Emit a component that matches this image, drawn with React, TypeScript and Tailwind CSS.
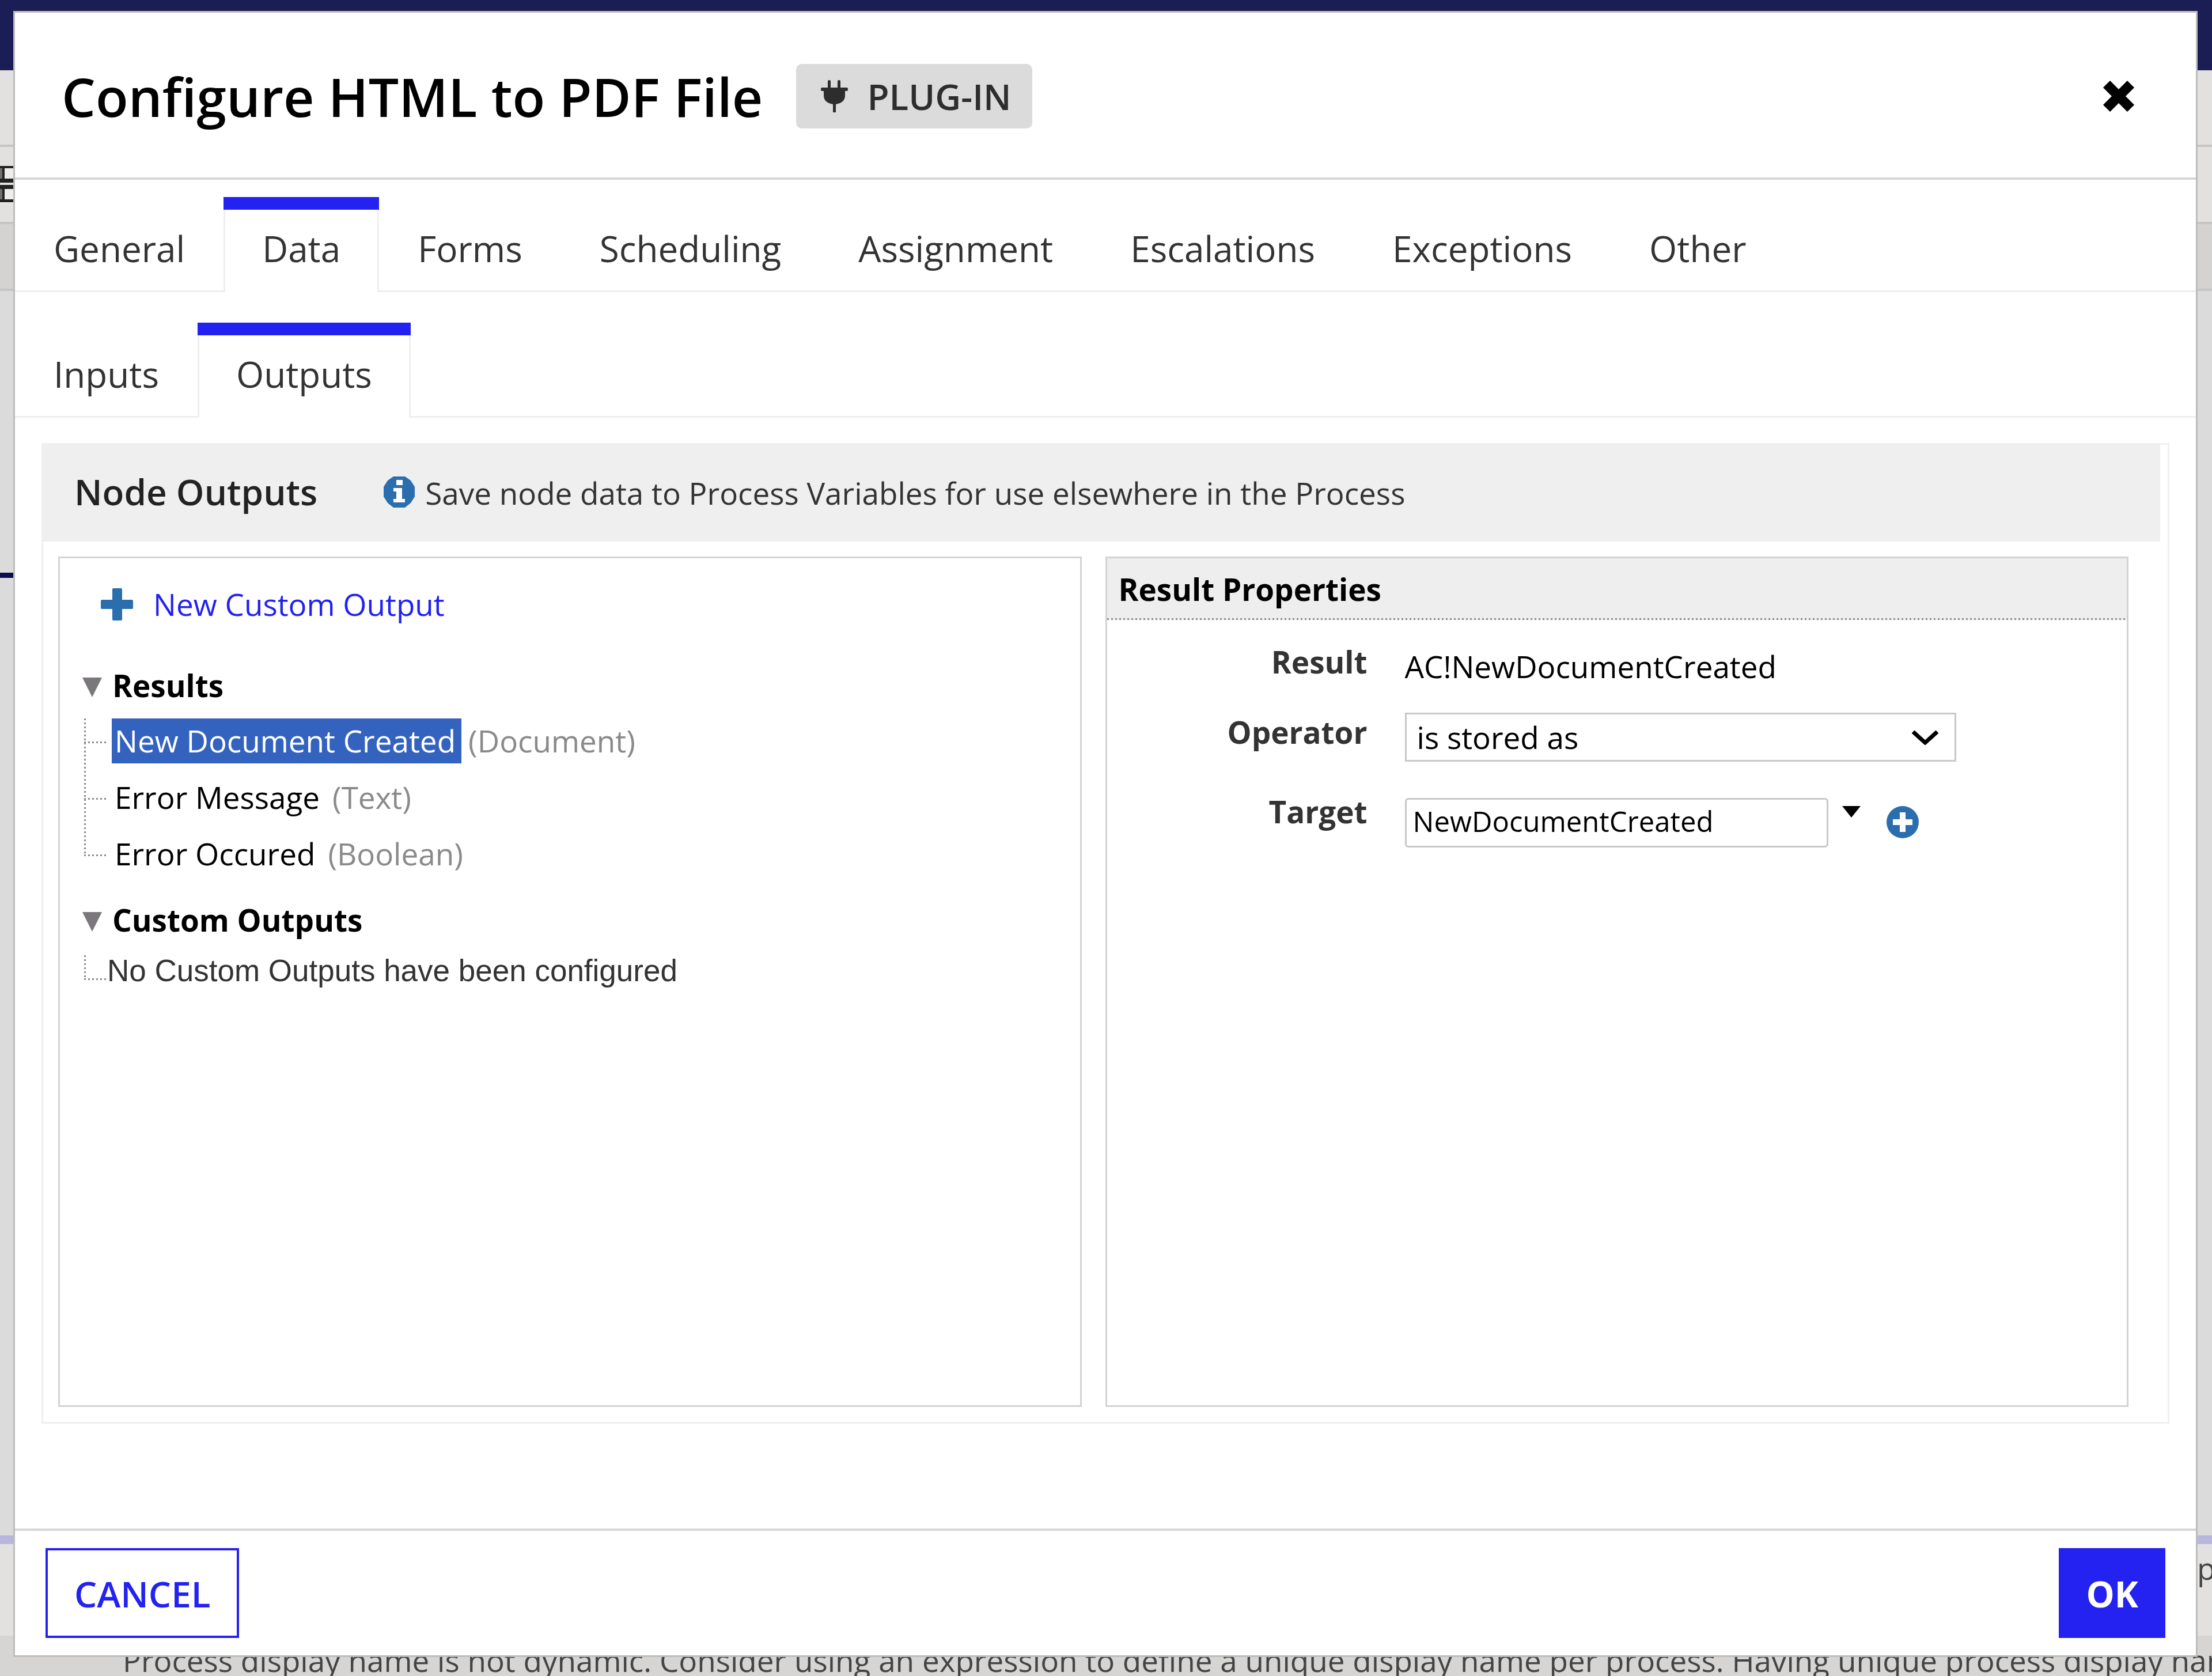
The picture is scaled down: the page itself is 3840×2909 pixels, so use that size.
import { useState } from "react";

function Dots({ vertical = false, className }: { vertical?: boolean; className: string }) {
  return (
    <span
      aria-hidden="true"
      className={
        (vertical
          ? "bg-[repeating-linear-gradient(to_bottom,#8a8a8a_0px,#8a8a8a_3px,transparent_3px,transparent_7px)] w-[3px] "
          : "bg-[repeating-linear-gradient(to_right,#8a8a8a_0px,#8a8a8a_3px,transparent_3px,transparent_7px)] h-[3px] ") + className
      }
    />
  );
}

function PlugIcon() {
  return (
    <svg viewBox="0 0 47 56" className="h-[56px] w-[47px]" aria-hidden="true">
      <path
        d="M12 2Q12 0 14.500 0T17 2V13H29V2Q29 0 31.500 0T34 2V13H45Q47 13 47 16T45 19H42V27Q42 39 26 42V56H21V42Q5 39 5 27V19H2Q0 19 0 16T2 13H12Z"
        fill="#2d2d2d"
      />
    </svg>
  );
}

function CloseIcon() {
  return (
    <svg viewBox="0 0 58 56" className="h-[56px] w-[58px]" aria-hidden="true">
      <path d="M8 7 L50 49 M50 7 L8 49" stroke="#000" strokeWidth="17" fill="none" />
    </svg>
  );
}

function InfoIcon() {
  return (
    <svg viewBox="0 0 54 54" className="mb-[5px] h-[54px] w-[54px]" aria-hidden="true">
      <path d="M17 0H37L47 7L54 18V35L47 46L37 54H17L7 46L0 35V18L7 7Z" fill="#2a6eae" />
      <path d="M22 6h11v9H22zM17 20h15v19h5v6H17v-6h5V26h-5z" fill="#fff" />
    </svg>
  );
}

function PlusIcon() {
  return (
    <svg viewBox="0 0 56 56" className="h-[56px] w-[56px]" aria-hidden="true">
      <path
        d="M21 0h14q2 0 2 2v18h17q2 0 2 2v12q0 2-2 2H37v18q0 2-2 2H22q-2 0-2-2V36H2q-2 0-2-2V22q0-2 2-2h18V2q0-2 2-2z"
        fill="#2a6eae"
      />
    </svg>
  );
}

function PlusCircleIcon() {
  return (
    <svg viewBox="0 0 56 56" className="h-[56px] w-[56px]" aria-hidden="true">
      <circle cx="28" cy="28" r="28" fill="#2a6eae" />
      <path d="M23 11h10v12h12v10H33v12H23V33H11V23h12z" fill="#fff" />
    </svg>
  );
}

function Triangle({ className }: { className: string }) {
  return (
    <svg viewBox="0 0 34 34" preserveAspectRatio="none" className={className} aria-hidden="true">
      <path d="M0 0H34L17 34Z" fill="currentColor" />
    </svg>
  );
}

function Tabs({ items, active, onSelect, label }: { items: string[]; active: string; onSelect: (s: string) => void; label: string }) {
  return (
    <div role="tablist" aria-label={label} className="flex h-[165px] text-[62px] leading-[80px] text-[#333]">
      {items.map((t) => (
        <button
          key={t}
          role="tab"
          aria-selected={t === active}
          onClick={() => onSelect(t)}
          className={t === active ? "flex border-t-[22px] border-[#2322f0]" : "flex border-b-[3px] border-[#eee] px-[67px] pt-[49px]"}
        >
          {t === active ? <span className="h-full border-x-[3px] border-[#eee] px-[64px] pt-[27px]">{t}</span> : t}
        </button>
      ))}
      <span className="flex-1 border-b-[3px] border-[#eee]" />
    </div>
  );
}

const results = [
  { name: "New Document Created", type: "(Document)" },
  { name: "Error Message", type: "(Text)" },
  { name: "Error Occured", type: "(Boolean)" },
];

function OutputTree() {
  const [selected, setSelected] = useState("New Document Created");
  return (
    <section className="border-[3px] border-[#d3d3d3] pt-[45px] pl-[39px] text-[53px] leading-[70px] text-black">
      <button className="flex items-center gap-[35px] pl-[32px] text-[#2322f0]">
        <PlusIcon />
        New Custom Output
      </button>
      <h3 className="mt-[71px] flex items-center gap-[18px] font-bold">
        <Triangle className="mt-[6px] h-[34px] w-[34px] text-[#7b787b]" />
        Results
      </h3>
      <ul className="mt-[22px]">
        {results.map((r, i) => (
          <li key={r.name} className="flex h-[98px]">
            <span className="relative w-[51px]">
              <Dots vertical className={i === results.length - 1 ? "absolute left-[3px] top-0 h-[42px]" : "absolute left-[3px] top-0 h-[98px]"} />
              <Dots className="absolute left-[3px] top-[40px] w-[40px]" />
            </span>
            <button
              onClick={() => setSelected(r.name)}
              className={r.name === selected ? "h-[78px] bg-[#3462bf] pr-[10px] pl-[5px] text-white" : "h-[78px] pr-[10px] pl-[5px]"}
            >
              {r.name}
            </button>
            <span className="ml-[12px] h-[78px] leading-[78px] text-[#8a8a8a]">{r.type}</span>
          </li>
        ))}
      </ul>
      <h3 className="mt-[21px] flex items-center gap-[18px] font-bold">
        <Triangle className="mt-[6px] h-[34px] w-[34px] text-[#7b787b]" />
        Custom Outputs
      </h3>
      <div className="mt-[18px] flex h-[70px] font-['Liberation_Sans',sans-serif] text-[#333]">
        <span className="relative w-[43px]">
          <Dots vertical className="absolute left-[3px] top-[8px] h-[42px]" />
          <Dots className="absolute left-[3px] top-[48px] w-[40px]" />
        </span>
        No Custom Outputs have been configured
      </div>
    </section>
  );
}

function ResultProperties() {
  return (
    <section className="border-[3px] border-[#d3d3d3] text-[53px] leading-[70px] text-black">
      <div className="flex h-[107px] flex-col justify-between bg-[#eee]">
        <h3 className="pt-[19px] pl-[20px] font-bold">Result Properties</h3>
        <Dots className="w-full" />
      </div>
      <div className="grid grid-cols-[452px_1fr] gap-x-[65px]">
        <span className="pt-[38px] text-right font-bold text-[#333]">Result</span>
        <span className="pt-[46px]">AC!NewDocumentCreated</span>
        <label htmlFor="operator" className="pt-[44px] text-right font-bold text-[#333]">
          Operator
        </label>
        <span className="relative mt-[45px] w-[957px]">
          <select id="operator" className="block h-[85px] w-full appearance-none border-[3px] border-[#c8c8c8] bg-white pl-[18px] leading-[70px]">
            <option>is stored as</option>
          </select>
          <svg viewBox="0 0 46 26" className="pointer-events-none absolute top-[30px] right-[31px] h-[26px] w-[46px]" aria-hidden="true">
            <path d="M2 3L23 22L44 3" stroke="#000" strokeWidth="7" fill="none" />
          </svg>
        </span>
        <label htmlFor="target" className="pt-[52px] text-right font-bold text-[#333]">
          Target
        </label>
        <span className="mt-[63px] flex">
          <input
            id="target"
            defaultValue="NewDocumentCreated"
            className="h-[86px] w-[735px] rounded-[6px] border-[3px] border-[#c8c8c8] pb-[6px] pl-[11px] text-[49px]"
          />
          <button aria-label="Choose target" className="ml-[24px] self-start pt-[14px]">
            <Triangle className="h-[20px] w-[32px] text-black" />
          </button>
          <button aria-label="New variable" className="ml-[45px] self-start pt-[14px]">
            <PlusCircleIcon />
          </button>
        </span>
      </div>
    </section>
  );
}

function Backdrop() {
  return (
    <div className="flex min-h-screen flex-col overflow-hidden bg-[#dbdbdb] text-[53px] leading-[70px] text-[#444]" aria-hidden="true">
      <div className="h-[122px] bg-[#1a1e54]" />
      <div className="h-[133px] border-b-[4px] border-[#c6c5c3] bg-[#e2e1df]" />
      <div className="flex h-[134px] items-center border-b-[4px] border-[#c6c5c3] bg-[#e2e1df]">
        <svg viewBox="0 0 24 66" className="h-[66px] w-[24px]">
          <path d="M0 0H24V30H0zM0 34H24V66H0z" fill="#eeedeb" />
          <path d="M0 3H4V28H0zM0 37H4V62H0z" fill="#707070" />
          <path d="M0 1H24V5H8V23H24V30H0V23H4V5H0zM0 34H24V41H8V59H24V64H0V59H4V41H0z" fill="#222" />
        </svg>
      </div>
      <div className="h-[116px] border-b-[4px] border-[#c6c5c3] bg-[#d4d3d1]" />
      <div className="flex-1 pt-[489px]">
        <div className="h-[9px] w-[24px] bg-[#0c0c50]" />
      </div>
      <div className="flex h-[174px] justify-end border-t-[15px] border-[#b9b6dd] bg-[#e2e1df] pt-[7px]">
        <span className="w-[26px]">p</span>
      </div>
      <div className="h-[70px] bg-[#d6d5d3] pt-[8px] pl-[213px] whitespace-nowrap">
        Process display name is not dynamic. Consider using an expression to define a unique display name per process. Having unique process display names
      </div>
    </div>
  );
}

export default function App() {
  const [tab, setTab] = useState("Data");
  const [sub, setSub] = useState("Outputs");
  return (
    <div className="relative h-screen overflow-hidden font-['Open_Sans',sans-serif]">
      <Backdrop />
      <div
        role="dialog"
        aria-labelledby="title"
        className="absolute inset-x-0 top-[19px] bottom-[33px] mr-[25px] ml-[23px] flex flex-col border-[3px] border-[#bdbdbd] bg-white"
      >
        <header className="flex h-[290px] items-center border-b-[4px] border-[#d6d6d6] pt-[4px] pr-[105px] pl-[81px]">
          <h1 id="title" className="text-[93px] leading-[120px] font-semibold text-black">
            Configure HTML to PDF File
          </h1>
          <span className="ml-[58px] flex h-[112px] items-center gap-[33px] rounded-[10px] bg-[#dbdbdb] pr-[36px] pl-[43px] text-[62px] font-semibold text-[#2d2d2d]">
            <PlugIcon />
            PLUG-IN
          </span>
          <button aria-label="Close" className="ml-auto">
            <CloseIcon />
          </button>
        </header>
        <main className="flex flex-1 flex-col pt-[30px]">
          <Tabs
            label="Node settings"
            items={["General", "Data", "Forms", "Scheduling", "Assignment", "Escalations", "Exceptions", "Other"]}
            active={tab}
            onSelect={setTab}
          />
          <div className="pt-[53px]">
            <Tabs label="Data direction" items={["Inputs", "Outputs"]} active={sub} onSelect={setSub} />
          </div>
          <div className="mx-[46px] mt-[44px] flex h-[1702px] flex-col border-[3px] border-[#efefef]">
            <div className="mr-[13px] flex h-[168px] items-center bg-[#efefef] pl-[54px] text-[#222]">
              <h2 className="pb-[6px] text-[62px] leading-[80px] font-semibold">Node Outputs</h2>
              <p className="ml-[115px] flex items-center gap-[18px] text-[53px] leading-[70px] text-[#333]">
                <InfoIcon />
                Save node data to Process Variables for use elsewhere in the Process
              </p>
            </div>
            <div className="grid flex-1 grid-cols-2 gap-[41px] pt-[26px] pr-[68px] pb-[26px] pl-[26px]">
              <OutputTree />
              <ResultProperties />
            </div>
          </div>
        </main>
        <footer className="flex h-[220px] justify-between border-t-[4px] border-[#d6d6d6] px-[53px] pt-[30px] text-[62px] leading-[80px]">
          <button className="h-[156px] border-[4px] border-[#2322f0] px-[46px] pt-[2px] font-semibold text-[#2322f0]">CANCEL</button>
          <button className="h-[156px] bg-[#2322f0] px-[47px] pt-[2px] font-bold text-white">OK</button>
        </footer>
      </div>
    </div>
  );
}
